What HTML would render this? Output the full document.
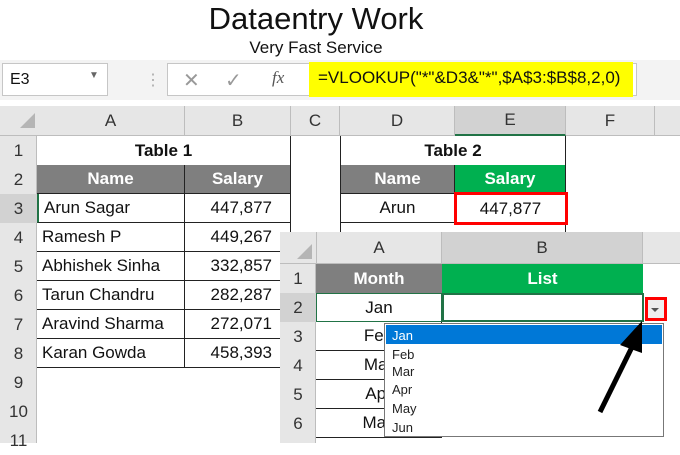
<!DOCTYPE html><html><head><style>
*{margin:0;padding:0;box-sizing:border-box}
body{width:680px;height:443px;overflow:hidden;background:#fff;position:relative;font-family:"Liberation Sans",sans-serif;color:#111}
.a{position:absolute}
.c{position:absolute;display:flex;align-items:center;justify-content:center;font-size:17px}
.hd{background:#e6e6e6;color:#333;border-right:1px solid #bdbdbd;border-bottom:1px solid #bdbdbd;font-size:17px}
.cell{border-right:1px solid #222;border-bottom:1px solid #222}
.gray{background:#7f7f7f;color:#fff;font-weight:bold}
.green{background:#00b050;color:#fff;font-weight:bold}
</style></head><body>
<div class="a" style="left:0;width:632px;top:0;text-align:center;font-size:31px;line-height:38px">Dataentry Work</div>
<div class="a" style="left:0;width:632px;top:38px;text-align:center;font-size:17px;line-height:20px">Very Fast Service</div>
<div class="a" style="left:0;top:60px;width:680px;height:40px;background:#f3f3f3"></div>
<div class="a" style="left:2px;top:63px;width:106px;height:33px;background:#fff;border:1px solid #c6c6c6;font-size:16px;padding:7px 0 0 7px">E3<span class="a" style="left:86px;top:6px;font-size:10px;color:#666">▼</span></div>
<div class="a" style="left:145px;top:70px;color:#aaa;font-size:16px">⋮</div>
<div class="a" style="left:167px;top:63px;width:470px;height:33px;background:#fff;border:1px solid #c6c6c6"></div>
<div class="a" style="left:183px;top:68px;color:#999;font-size:20px">✕</div>
<div class="a" style="left:225px;top:68px;color:#999;font-size:20px">✓</div>
<div class="a" style="left:272px;top:68px;color:#555;font-size:17px;font-style:italic;font-family:'Liberation Serif',serif">fx</div>
<div class="a" style="left:309px;top:62px;width:324px;height:35px;background:#ffff00"></div>
<div class="a" style="left:318px;top:68px;font-size:17px;white-space:nowrap">=VLOOKUP("*"&amp;D3&amp;"*",$A$3:$B$8,2,0)</div>
<div class="a" style="left:0;top:106px;width:680px;height:30px;background:#e6e6e6;border-bottom:1px solid #bdbdbd"></div>
<div class="a" style="left:20px;top:113px;width:0;height:0;border-left:15px solid transparent;border-bottom:15px solid #b5b5b5"></div>
<div class="c hd" style="left:37px;top:106px;width:148px;height:30px">A</div>
<div class="c hd" style="left:185px;top:106px;width:106px;height:30px">B</div>
<div class="c hd" style="left:291px;top:106px;width:49px;height:30px">C</div>
<div class="c hd" style="left:340px;top:106px;width:115px;height:30px">D</div>
<div class="c hd" style="left:455px;top:106px;width:111px;height:30px;background:#d2d2d2;border-bottom:2px solid #217346">E</div>
<div class="c hd" style="left:566px;top:106px;width:89px;height:30px">F</div>
<div class="a" style="left:0;top:136px;width:37px;height:307px;background:#e6e6e6;border-right:1px solid #bdbdbd"></div>
<div class="c" style="left:0;top:136px;width:37px;height:29px;color:#333">1</div>
<div class="c" style="left:0;top:165px;width:37px;height:29px;color:#333">2</div>
<div class="c" style="left:0;top:194px;width:37px;height:29px;color:#333;background:#d2d2d2">3</div>
<div class="c" style="left:0;top:223px;width:37px;height:29px;color:#333">4</div>
<div class="c" style="left:0;top:252px;width:37px;height:29px;color:#333">5</div>
<div class="c" style="left:0;top:281px;width:37px;height:29px;color:#333">6</div>
<div class="c" style="left:0;top:310px;width:37px;height:29px;color:#333">7</div>
<div class="c" style="left:0;top:339px;width:37px;height:29px;color:#333">8</div>
<div class="c" style="left:0;top:368px;width:37px;height:29px;color:#333">9</div>
<div class="c" style="left:0;top:397px;width:37px;height:29px;color:#333">10</div>
<div class="c" style="left:0;top:426px;width:37px;height:29px;color:#333">11</div>
<div class="c" style="left:37px;top:136px;width:254px;height:29px;font-weight:bold;border-right:1px solid #222">Table 1</div>
<div class="c gray cell" style="left:37px;top:165px;width:148px;height:29px">Name</div>
<div class="c gray cell" style="left:185px;top:165px;width:106px;height:29px">Salary</div>
<div class="c cell" style="left:37px;top:194px;width:148px;height:29px;justify-content:flex-start;padding-left:5px;border-left:2px solid #217346">Arun Sagar</div>
<div class="c cell" style="left:185px;top:194px;width:106px;height:29px;justify-content:flex-end;padding-right:18px">447,877</div>
<div class="c cell" style="left:37px;top:223px;width:148px;height:29px;justify-content:flex-start;padding-left:5px">Ramesh P</div>
<div class="c cell" style="left:185px;top:223px;width:106px;height:29px;justify-content:flex-end;padding-right:18px">449,267</div>
<div class="c cell" style="left:37px;top:252px;width:148px;height:29px;justify-content:flex-start;padding-left:5px">Abhishek Sinha</div>
<div class="c cell" style="left:185px;top:252px;width:106px;height:29px;justify-content:flex-end;padding-right:18px">332,857</div>
<div class="c cell" style="left:37px;top:281px;width:148px;height:29px;justify-content:flex-start;padding-left:5px">Tarun Chandru</div>
<div class="c cell" style="left:185px;top:281px;width:106px;height:29px;justify-content:flex-end;padding-right:18px">282,287</div>
<div class="c cell" style="left:37px;top:310px;width:148px;height:29px;justify-content:flex-start;padding-left:5px">Aravind Sharma</div>
<div class="c cell" style="left:185px;top:310px;width:106px;height:29px;justify-content:flex-end;padding-right:18px">272,071</div>
<div class="c cell" style="left:37px;top:339px;width:148px;height:29px;justify-content:flex-start;padding-left:5px">Karan Gowda</div>
<div class="c cell" style="left:185px;top:339px;width:106px;height:29px;justify-content:flex-end;padding-right:18px">458,393</div>
<div class="c" style="left:340px;top:136px;width:226px;height:29px;font-weight:bold;border-left:1px solid #222;border-right:1px solid #222">Table 2</div>
<div class="c gray cell" style="left:340px;top:165px;width:115px;height:29px;border-left:1px solid #222">Name</div>
<div class="c green cell" style="left:455px;top:165px;width:111px;height:29px">Salary</div>
<div class="c cell" style="left:340px;top:194px;width:115px;height:29px;border-left:1px solid #222">Arun</div>
<div class="c" style="left:455px;top:194px;width:111px;height:29px">447,877</div>
<div class="a" style="left:340px;top:223px;width:226px;height:10px;border-left:1px solid #222;border-right:1px solid #222"></div>
<div class="a" style="left:454px;top:192px;width:114px;height:33px;border:3px solid #ff0000"></div>
<div class="a" style="left:280px;top:232px;width:400px;height:211px;background:#fff"></div>
<div class="a" style="left:280px;top:232px;width:400px;height:32px;background:#e6e6e6;border-bottom:1px solid #bdbdbd"></div>
<div class="a" style="left:297px;top:244px;width:0;height:0;border-left:15px solid transparent;border-bottom:15px solid #b5b5b5"></div>
<div class="c hd" style="left:316px;top:232px;width:126px;height:32px;border-left:1px solid #bdbdbd">A</div>
<div class="c hd" style="left:442px;top:232px;width:201px;height:32px;background:#d2d2d2">B</div>
<div class="a" style="left:280px;top:264px;width:36px;height:179px;background:#e6e6e6;border-right:1px solid #bdbdbd"></div>
<div class="c" style="left:280px;top:264px;width:36px;height:29px;color:#333">1</div>
<div class="c" style="left:280px;top:293px;width:36px;height:29px;color:#333;background:#d2d2d2">2</div>
<div class="c" style="left:280px;top:322px;width:36px;height:29px;color:#333">3</div>
<div class="c" style="left:280px;top:351px;width:36px;height:29px;color:#333">4</div>
<div class="c" style="left:280px;top:380px;width:36px;height:29px;color:#333">5</div>
<div class="c" style="left:280px;top:409px;width:36px;height:29px;color:#333">6</div>
<div class="c gray" style="left:316px;top:264px;width:126px;height:29px">Month</div>
<div class="c green" style="left:442px;top:264px;width:201px;height:29px">List</div>
<div class="c" style="left:316px;top:293px;width:126px;height:29px;border:1px solid #217346">Jan</div>
<div class="a" style="left:442px;top:293px;width:202px;height:29px;border:2px solid #217346"></div>
<div class="c cell" style="left:316px;top:322px;width:126px;height:29px">Feb</div>
<div class="c cell" style="left:316px;top:351px;width:126px;height:29px">Mar</div>
<div class="c cell" style="left:316px;top:380px;width:126px;height:29px">Apr</div>
<div class="c cell" style="left:316px;top:409px;width:126px;height:29px">May</div>
<div class="a" style="left:645px;top:297px;width:22px;height:24px;border:3px solid #ff0000;background:#eee"></div>
<div class="a" style="left:651px;top:308px;width:0;height:0;border-left:4px solid transparent;border-right:4px solid transparent;border-top:4px solid #555"></div>
<div class="a" style="left:384px;top:323px;width:280px;height:114px;background:#fff;border:1px solid #777;font-size:13px;color:#222">
<div style="height:19px;background:#0078d7;color:#fff;padding:3px 0 0 6px;margin:1px 1px 0">Jan</div>
<div style="height:19px;padding:3px 0 0 7px">Feb</div>
<div style="height:19px;padding:1px 0 0 7px">Mar</div>
<div style="height:19px;padding:0 0 0 7px">Apr</div>
<div style="height:19px;padding:0 0 0 7px">May</div>
<div style="height:19px;padding:0 0 0 7px">Jun</div>
</div>
<svg class="a" style="left:590px;top:315px" width="60" height="105"><line x1="10" y1="97" x2="43" y2="30" stroke="#000" stroke-width="5"/><polygon points="52,6 30,30 52,38" fill="#000"/></svg>
</body></html>
